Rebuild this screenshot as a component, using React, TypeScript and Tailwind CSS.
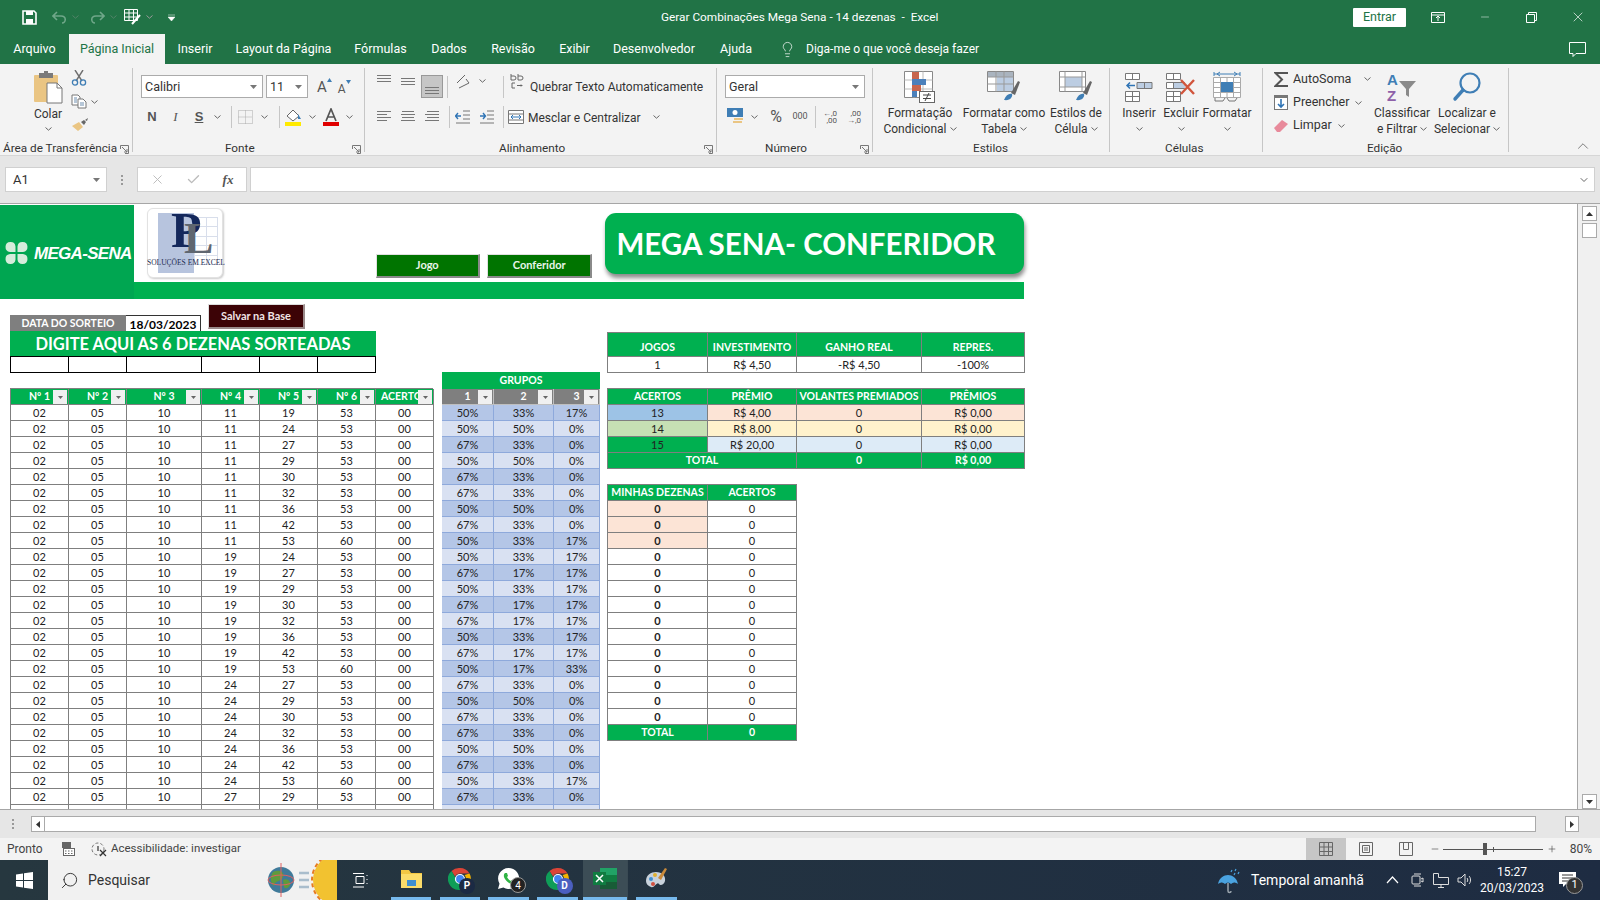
import { ReactNode } from "react";
import { ChevronDown, ChevronUp, Lightbulb, Search, Minus, X, Plus, Check } from "lucide-react";

const Chev = ({ className = "" }: { className?: string }) => (
  <svg width="7" height="4" viewBox="0 0 7 4" className={`shrink-0 ${className}`}>
    <path d="M.5.5 3.5 3.2 6.5.5" fill="none" stroke="#666" strokeWidth="1" />
  </svg>
);

const Caret = ({ className = "" }: { className?: string }) => (
  <svg width="7" height="4" viewBox="0 0 7 4" className={`shrink-0 ${className}`}>
    <path d="M0 0h7L3.5 4z" fill="#777" />
  </svg>
);

const VSep = ({ className = "" }: { className?: string }) => (
  <div className={`h-[22px] w-px shrink-0 bg-[#c6c6c6] ${className}`} />
);

const Launcher = () => (
  <svg width="9" height="9" viewBox="0 0 9 9" className="shrink-0">
    <path d="M.5 4V.5H8.500V8.500H5M2 2l5 5M7 4v3H4" fill="none" stroke="#777" strokeWidth="1" />
  </svg>
);

const Lines = ({ kind }: { kind: "l" | "c" | "r" }) => {
  const s = kind === "l" ? [1, 1, 1, 1] : kind === "c" ? [2, 1, 2, 1] : [3, 1, 3, 1];
  const w = kind === "l" ? [14, 10, 14, 10] : kind === "c" ? [12, 14, 12, 14] : [12, 14, 12, 14];
  return (
    <svg width="16" height="14" viewBox="0 0 16 14">
      {s.map((x, i) => (
        <rect key={i} x={x} y={1 + i * 3} width={w[i]} height="1" fill="#777" />
      ))}
    </svg>
  );
};

const VAlign = ({ offset }: { offset: number }) => (
  <svg width="16" height="14" viewBox="0 0 16 14">
    {[0, 3, 6].map((d) => (
      <rect key={d} x="1" y={offset + d} width="14" height="1" fill="#777" />
    ))}
  </svg>
);

const Group = ({
  w,
  label,
  labelClass = "justify-center",
  launcher,
  children,
}: {
  w: string;
  label: string;
  labelClass?: string;
  launcher?: boolean;
  children: ReactNode;
}) => (
  <div className={`flex h-full shrink-0 flex-col ${w}`}>
    <div className="h-[77px] overflow-hidden">{children}</div>
    <div className={`flex h-[14px] items-center whitespace-nowrap pt-[2px] text-[11.75px] leading-none ${labelClass}`}>
      <span>{label}</span>
      {launcher && (
        <span className="ml-auto mr-[3px]">
          <Launcher />
        </span>
      )}
    </div>
  </div>
);

const RibbonSep = () => <div className="my-[4px] h-[84px] w-px shrink-0 bg-[#c6c6c6]" />;

const BigButton = ({
  w,
  icon,
  a,
  b,
  chevInline = true,
}: {
  w: string;
  icon: ReactNode;
  a: string;
  b?: string;
  chevInline?: boolean;
}) => (
  <div className={`flex shrink-0 flex-col items-center text-[12px] leading-[16px] ${w}`}>
    <div className="mt-[6px] flex h-[34px] items-center justify-center">{icon}</div>
    <div className="mt-px whitespace-nowrap">{a}</div>
    {chevInline ? (
      <div className="flex items-center gap-[3px] whitespace-nowrap">
        {b}
        <Chev />
      </div>
    ) : (
      <div className="flex h-[16px] items-center">
        <Chev />
      </div>
    )}
  </div>
);

const Combo = ({ w, text }: { w: string; text: string }) => (
  <div className={`flex h-[23px] shrink-0 items-center justify-between border border-[#ababab] bg-white pl-[3px] pr-[5px] pt-px text-[12.5px] ${w}`}>
    <span>{text}</span>
    <Caret />
  </div>
);

const PasteIcon = () => (
  <svg width="30" height="33" viewBox="0 0 30 33">
    <rect x="1" y="4" width="24" height="27" rx="1" fill="#eac583" />
    <rect x="6" y="2" width="14" height="5" fill="#7a7a7a" />
    <rect x="11" y="0" width="4" height="3" fill="#7a7a7a" />
    <path d="M14 12h10l5 5v15H14z" fill="#fff" stroke="#777" />
    <path d="M24 12v5h5" fill="none" stroke="#777" />
  </svg>
);

const ScissorsIcon = () => (
  <svg width="16" height="16" viewBox="0 0 16 16">
    <path d="M4 0l7 11M12 0 5 11" stroke="#6f6f6f" strokeWidth="1.400" fill="none" />
    <circle cx="4" cy="12.500" r="2.600" fill="none" stroke="#3f7eb5" strokeWidth="1.300" />
    <circle cx="12" cy="12.500" r="2.600" fill="none" stroke="#3f7eb5" strokeWidth="1.300" />
  </svg>
);

const CopyIcon = () => (
  <svg width="16" height="15" viewBox="0 0 16 15">
    <path d="M1 1h6l2 2v8H1z" fill="#fff" stroke="#777" />
    <path d="M7 5h5l3 3v6H7z" fill="#fff" stroke="#777" />
    <path d="M3 4h3M3 6h3M3 8h3M9 9h4M9 11h4" stroke="#6f8fb0" />
  </svg>
);

const BrushIcon = () => (
  <svg width="18" height="15" viewBox="0 0 18 15">
    <path d="M1 9l7-4 4 5-5 4z" fill="#eac583" />
    <path d="M10 5l3-2 2 2-2 3z" fill="#666" />
    <path d="M14 3l3-2-1 3z" fill="#666" />
  </svg>
);

const CondFormatIcon = () => (
  <svg width="32" height="32" viewBox="0 0 32 32">
    <path d="M.5.5h28v26H.5z" fill="#fff" stroke="#888" />
    <path d="M10 .5v26M19 .5v26M.5 9h28M.5 18h28" stroke="#bbb" />
    <rect x="8" y="1" width="7" height="7" fill="#c8664e" />
    <rect x="8" y="8" width="14" height="6" fill="#4b80bb" />
    <rect x="8" y="14" width="9" height="6" fill="#c8664e" />
    <rect x="8" y="20" width="5" height="6" fill="#4b80bb" />
    <rect x="15.500" y="20.500" width="15" height="11" fill="#fff" stroke="#666" />
    <path d="M19 24h8M19 27.500h8M25 22l-4 8" stroke="#444" fill="none" />
  </svg>
);

const TableStyleIcon = () => (
  <svg width="34" height="32" viewBox="0 0 34 32">
    <path d="M.5.5h26v20H.5z" fill="#fff" stroke="#888" />
    <rect x="1" y="1" width="25" height="5" fill="#aab4bf" />
    <rect x="10" y="6" width="16" height="14" fill="#bccde2" />
    <path d="M9 .5v20M17 .5v20M.5 6h26M.5 13h26" stroke="#999" />
    <path d="M24 22l7-12 2 1-5 13z" fill="#666" />
    <path d="M17 29c2-5 5-7 8-6 1 3-2 7-8 6z" fill="#3f7eb5" />
  </svg>
);

const CellStyleIcon = () => (
  <svg width="34" height="32" viewBox="0 0 34 32">
    <path d="M.5.5h26v20H.5z" fill="#fff" stroke="#888" />
    <rect x="6" y="6" width="17" height="10" fill="#bccde2" />
    <path d="M6 .5v20M23 .5v20M.5 6h26M.5 16h26" stroke="#999" />
    <path d="M24 22l7-12 2 1-5 13z" fill="#666" />
    <path d="M17 29c2-5 5-7 8-6 1 3-2 7-8 6z" fill="#3f7eb5" />
  </svg>
);

const InsertIcon = () => (
  <svg width="28" height="30" viewBox="0 0 28 30">
    <path d="M.5 1.500h14v6H.5zM.5 19.500h14v10H.5zM7.500 19.500v10M.5 24.500h14M7.500 1.500v6" fill="#fff" stroke="#777" />
    <path d="M12 10.500h15v6H12zM19.500 10.500v6" fill="#bccde2" stroke="#777" />
    <path d="M10 13.500H2M5 10.500l-3 3 3 3" stroke="#2f74b5" strokeWidth="1.500" fill="none" />
  </svg>
);

const DeleteIcon = () => (
  <svg width="30" height="30" viewBox="0 0 30 30">
    <path d="M.5 1.500h14v6H.5zM.5 19.500h14v10H.5zM7.500 19.500v10M.5 24.500h14M7.500 1.500v6M.5 10.500h18v6H.5zM7.500 10.500v6" fill="#fff" stroke="#777" />
    <rect x="8" y="11" width="11" height="5" fill="#bccde2" />
    <path d="M15 8l13 14M28 8 15 22" stroke="#d1553c" strokeWidth="2.400" />
  </svg>
);

const FormatIcon = () => (
  <svg width="28" height="32" viewBox="0 0 28 32">
    <path d="M.5 6.500h27v20H.5zM7.500 6.500v20M20.500 6.500v20M14 6.500v20M.5 11.500h27M.5 16.500h27M.5 21.500h27" fill="#fff" stroke="#aaa" />
    <rect x="8" y="11" width="12" height="10" fill="#3f7eb5" />
    <path d="M1 3h26M1 1v4M27 1v4M4 3l3-2M4 3l3 2M24 3l-3-2M24 3l-3 2" stroke="#3f7eb5" fill="none" />
    <path d="M2 27v3h8l2-3M14 27l2 3h6l2-3" stroke="#777" fill="none" />
  </svg>
);

const SortIcon = () => (
  <svg width="30" height="32" viewBox="0 0 30 32">
    <text x="0" y="14" fontSize="15" fontWeight="700" fill="#3f7eb5" fontFamily="Liberation Sans, sans-serif">A</text>
    <text x="0" y="30" fontSize="15" fontWeight="700" fill="#8e60a8" fontFamily="Liberation Sans, sans-serif">Z</text>
    <path d="M12 10h17l-7 8v8l-3-2v-6z" fill="#8a8a8a" />
  </svg>
);

const FindIcon = () => (
  <svg width="30" height="32" viewBox="0 0 30 32">
    <circle cx="18" cy="12" r="9.500" fill="none" stroke="#3f7eb5" strokeWidth="2.200" />
    <path d="M11 19 3 28" stroke="#3f7eb5" strokeWidth="3.400" strokeLinecap="round" />
  </svg>
);

const SmallIcon = ({ children, w = "w-[24px]" }: { children: ReactNode; w?: string }) => (
  <div className={`flex h-full shrink-0 items-center justify-center ${w}`}>{children}</div>
);

const Ribbon = () => (
  <div className="flex h-[92px] border-b border-[#d6d6d6] bg-[#f3f3f3] text-[#333]">
    <Group w="w-[132px]" label="Área de Transferência" labelClass="pl-[3px]" launcher>
      <div className="flex">
        <div className="ml-[33px] flex w-[30px] flex-col items-center text-[12px]">
          <div className="mt-[7px]">
            <PasteIcon />
          </div>
          <div className="mt-[2px] leading-[16px]">Colar</div>
          <Chev className="mt-[5px]" />
        </div>
        <div className="ml-[8px] flex flex-col">
          <div className="mt-[6px]">
            <ScissorsIcon />
          </div>
          <div className="mt-[8px] flex items-center gap-[4px]">
            <CopyIcon />
            <Chev />
          </div>
          <div className="mt-[8px]">
            <BrushIcon />
          </div>
        </div>
      </div>
    </Group>
    <RibbonSep />
    <Group w="w-[231px]" label="Fonte" launcher labelClass="pl-[92px]">
      <div className="flex h-[34px] items-end pl-[8px]">
        <Combo w="w-[122px]" text="Calibri" />
        <Combo w="w-[42px] ml-[3px]" text="11" />
        <span className="ml-[9px] mb-[3px] text-[15px] leading-none text-[#555]">A</span>
        <svg width="5" height="4" viewBox="0 0 5 4" className="mb-[16px]"><path d="M0 4l2.500-4L5 4z" fill="#3f7eb5" /></svg>
        <span className="ml-[6px] mb-[3px] text-[12px] leading-none text-[#555]">A</span>
        <svg width="5" height="4" viewBox="0 0 5 4" className="mb-[14px]"><path d="M0 0l2.500 4L5 0z" fill="#3f7eb5" /></svg>
      </div>
      <div className="mt-[7px] flex h-[23px] items-center pl-[7px] text-[13px] text-[#555]">
        <SmallIcon><b className="font-['Liberation_Sans',sans-serif]">N</b></SmallIcon>
        <SmallIcon w="w-[23px]"><i className="font-['Liberation_Serif',serif]">I</i></SmallIcon>
        <SmallIcon><b className="underline font-['Liberation_Sans',sans-serif]">S</b></SmallIcon>
        <SmallIcon w="w-[12px]"><Chev /></SmallIcon>
        <VSep className="ml-[8px]" />
        <SmallIcon w="w-[26px]">
          <svg width="15" height="14" viewBox="0 0 15 14"><path d="M.5.5h14v13H.5zM7.500 .5v13M.5 7h14" fill="none" stroke="#aaa" strokeDasharray="1 1" /></svg>
        </SmallIcon>
        <SmallIcon w="w-[12px]"><Chev /></SmallIcon>
        <VSep className="ml-[9px]" />
        <SmallIcon w="w-[26px]">
          <svg width="17" height="18" viewBox="0 0 17 18"><path d="M2 8l6-6 6 6-6 5z" fill="#fff" stroke="#666" /><path d="M13 6l3 5h-3z" fill="#3f7eb5" /><rect x="0" y="14" width="16" height="4" fill="#ffea00" /></svg>
        </SmallIcon>
        <SmallIcon w="w-[12px]"><Chev /></SmallIcon>
        <SmallIcon w="w-[26px]">
          <svg width="16" height="18" viewBox="0 0 16 18"><path d="M3 13 8 1l5 12M5 9h6" fill="none" stroke="#555" strokeWidth="1.700" /><rect x="0" y="14" width="16" height="4" fill="#e00000" /></svg>
        </SmallIcon>
        <SmallIcon w="w-[10px]"><Chev /></SmallIcon>
      </div>
    </Group>
    <RibbonSep />
    <Group w="w-[351px]" label="Alinhamento" launcher labelClass="pl-[134px]">
      <div className="flex h-[34px] items-end pl-[7px]">
        <SmallIcon><VAlign offset={1} /></SmallIcon>
        <SmallIcon><VAlign offset={4} /></SmallIcon>
        <div className="ml-[1px] flex h-[23px] w-[22px] items-center justify-center border border-[#999] bg-[#c6c6c6]"><VAlign offset={7} /></div>
        <VSep className="ml-[4px]" />
        <SmallIcon w="w-[30px]">
          <svg width="16" height="16" viewBox="0 0 16 16"><path d="M2 10l8-8M4 15l10-5M11 6l3 4" stroke="#666" fill="none" /></svg>
        </SmallIcon>
        <SmallIcon w="w-[8px]"><Chev /></SmallIcon>
        <VSep className="ml-[17px]" />
        <SmallIcon w="w-[26px]">
          <svg width="14" height="16" viewBox="0 0 14 16"><path d="M1 1v6h3a2 2 0 0 0 0-4H1M8 1v6h3a2 2 0 0 0 0-4H8M5 10H2v5h3M7 12.500h5l-1-1M12 12.500l-1 1" fill="none" stroke="#666" /></svg>
        </SmallIcon>
        <span className="h-[23px] whitespace-nowrap pt-px text-[12px] leading-[23px]">Quebrar Texto Automaticamente</span>
      </div>
      <div className="mt-[7px] flex h-[23px] items-center pl-[7px]">
        <SmallIcon><Lines kind="l" /></SmallIcon>
        <SmallIcon><Lines kind="c" /></SmallIcon>
        <SmallIcon w="w-[23px]"><Lines kind="r" /></SmallIcon>
        <VSep className="ml-[6px]" />
        <SmallIcon w="w-[26px]">
          <svg width="16" height="14" viewBox="0 0 16 14"><path d="M8 1h7M8 5h7M8 9h7M1 13h14" stroke="#777" /><path d="M6 6H1M3 3 .5 6 3 9" stroke="#2f74b5" strokeWidth="1.400" fill="none" /></svg>
        </SmallIcon>
        <SmallIcon w="w-[22px]">
          <svg width="16" height="14" viewBox="0 0 16 14"><path d="M8 1h7M8 5h7M8 9h7M1 13h14" stroke="#777" /><path d="M1 6h5M4 3l2.500 3L4 9" stroke="#2f74b5" strokeWidth="1.400" fill="none" /></svg>
        </SmallIcon>
        <VSep className="ml-[5px]" />
        <SmallIcon w="w-[24px]">
          <svg width="16" height="16" viewBox="0 0 16 16"><path d="M.5 1.500h15v13H.5zM.5 5h15M.5 11h15" fill="#fff" stroke="#777" /><path d="M3 8h10M5 6 3 8l2 2M11 6l2 2-2 2" stroke="#2f74b5" fill="none" /></svg>
        </SmallIcon>
        <span className="whitespace-nowrap pt-[2px] text-[12px]">Mesclar e Centralizar</span>
        <Chev className="ml-[12px]" />
      </div>
    </Group>
    <RibbonSep />
    <Group w="w-[155px]" label="Número" launcher labelClass="pl-[48px]">
      <div className="flex h-[34px] items-end pl-[8px]">
        <Combo w="w-[140px]" text="Geral" />
      </div>
      <div className="mt-[7px] flex h-[23px] items-center pl-[9px] text-[#555]">
        <SmallIcon w="w-[20px]">
          <svg width="18" height="17" viewBox="0 0 18 17"><rect x="0" y="0" width="16" height="9" fill="#3f7eb5" /><circle cx="8" cy="4.500" r="2.500" fill="#fff" /><rect x="7" y="10" width="9" height="2" fill="#eac583" /><rect x="6" y="13" width="9" height="2" fill="#eac583" /></svg>
        </SmallIcon>
        <SmallIcon w="w-[16px]"><Chev /></SmallIcon>
        <SmallIcon w="w-[28px]"><span className="text-[16px]">%</span></SmallIcon>
        <SmallIcon w="w-[20px]"><span className="text-[9px]">000</span></SmallIcon>
        <VSep className="ml-[5px]" />
        <SmallIcon w="w-[28px]">
          <span className="text-right text-[8px] leading-[7px]">←,0<br />,00</span>
        </SmallIcon>
        <SmallIcon w="w-[20px]">
          <span className="text-right text-[8px] leading-[7px]">,00<br />→,0</span>
        </SmallIcon>
      </div>
    </Group>
    <RibbonSep />
    <Group w="w-[236px]" label="Estilos" labelClass="pl-[100px]">
      <div className="flex">
        <BigButton w="w-[94px]" icon={<CondFormatIcon />} a="Formatação" b="Condicional" />
        <BigButton w="w-[74px]" icon={<TableStyleIcon />} a="Formatar como" b="Tabela" />
        <BigButton w="w-[66px] ml-[2px]" icon={<CellStyleIcon />} a="Estilos de" b="Célula" />
      </div>
    </Group>
    <RibbonSep />
    <Group w="w-[152px]" label="Células" labelClass="pl-[55px]">
      <div className="flex pl-[7px]">
        <BigButton w="w-[44px]" icon={<InsertIcon />} a="Inserir" chevInline={false} />
        <BigButton w="w-[40px]" icon={<DeleteIcon />} a="Excluir" chevInline={false} />
        <BigButton w="w-[52px]" icon={<FormatIcon />} a="Formatar" chevInline={false} />
      </div>
    </Group>
    <RibbonSep />
    <Group w="w-[245px]" label="Edição" labelClass="pl-[104px]">
      <div className="flex">
        <div className="ml-[11px] mt-[3px] flex w-[100px] flex-col text-[12.5px]">
          <div className="flex h-[24px] items-center">
            <svg width="15" height="15" viewBox="0 0 15 15" className="mr-[4px]"><path d="M14 1H1.500L8 7.500 1.500 14H14" fill="none" stroke="#555" strokeWidth="2" /></svg>
            <span>AutoSoma</span>
            <Chev className="ml-[13px]" />
          </div>
          <div className="flex h-[23px] items-center">
            <svg width="14" height="15" viewBox="0 0 14 15" className="mr-[5px]"><rect x=".5" y=".5" width="13" height="14" fill="#fff" stroke="#777" /><rect x="0" y="0" width="14" height="3" fill="#777" /><path d="M7 4v8M4 9l3 3 3-3" stroke="#2f74b5" strokeWidth="1.600" fill="none" /></svg>
            <span>Preencher</span>
            <Chev className="ml-[6px]" />
          </div>
          <div className="flex h-[23px] items-center">
            <svg width="14" height="12" viewBox="0 0 14 12" className="mr-[5px]"><path d="M0 8l8-8 6 4-8 8H3z" fill="#e88a9b" /></svg>
            <span>Limpar</span>
            <Chev className="ml-[6px]" />
          </div>
        </div>
        <BigButton w="w-[66px] ml-[-5px]" icon={<SortIcon />} a="Classificar" b="e Filtrar" />
        <BigButton w="w-[64px]" icon={<FindIcon />} a="Localizar e" b="Selecionar" />
      </div>
    </Group>
    <RibbonSep />
    <div className="flex flex-1 items-end justify-end pr-[8px]">
      <ChevronUp size={18} strokeWidth={1} className="text-[#555]" />
    </div>
  </div>
);

const tabs = [
  { label: "Arquivo", w: "w-[69px]" },
  { label: "Página Inicial", w: "w-[96px]", active: true },
  { label: "Inserir", w: "w-[60px]" },
  { label: "Layout da Página", w: "w-[117px]" },
  { label: "Fórmulas", w: "w-[77px]" },
  { label: "Dados", w: "w-[60px]" },
  { label: "Revisão", w: "w-[68px]" },
  { label: "Exibir", w: "w-[55px]" },
  { label: "Desenvolvedor", w: "w-[104px]" },
  { label: "Ajuda", w: "w-[60px]" },
];

const TitleBar = () => (
  <div className="flex h-[34px] items-center bg-[#217346] text-white">
    <div className="flex w-[600px] items-center pl-[22px]">
      <svg width="15" height="15" viewBox="0 0 15 15"><path d="M1 1h11l2 2v11H1z" fill="none" stroke="#fff" strokeWidth="1.600" /><rect x="4" y="1" width="7" height="4" fill="#fff" /><rect x="4" y="9" width="7" height="5" fill="#fff" /></svg>
      <svg width="15" height="13" viewBox="0 0 15 13" className="ml-[15px]"><path d="M5 1 1 5l4 4M1 5h8c6 0 5 7 1 7" fill="none" stroke="#6fa789" strokeWidth="1.600" /></svg>
      <Chev className="ml-[5px] opacity-40 invert" />
      <svg width="15" height="13" viewBox="0 0 15 13" className="ml-[11px]"><path d="M10 1l4 4-4 4M14 5H6C0 5 1 12 5 12" fill="none" stroke="#6fa789" strokeWidth="1.600" /></svg>
      <Chev className="ml-[5px] opacity-40 invert" />
      <svg width="17" height="16" viewBox="0 0 17 16" className="ml-[7px]"><path d="M.5.5h13v11H.5zM5 .5v11M9.500 .5v11M.5 4h13M.5 8h13" fill="none" stroke="#fff" /><path d="M8 15l8-9" stroke="#fff" strokeWidth="2" /></svg>
      <Chev className="ml-[5px] invert" />
      <svg width="7" height="7" viewBox="0 0 7 7" className="ml-[15px]"><path d="M0 1h7M0 3h7L3.500 7z" fill="#fff" stroke="#fff" strokeWidth=".5" /></svg>
    </div>
    <div className="ml-[61px] mt-[2px] whitespace-pre text-[11.8px]">Gerar Combinações Mega Sena - 14 dezenas  -  Excel</div>
    <div className="ml-auto flex items-center">
      <div className="flex h-[19px] w-[53px] items-center justify-center rounded-[1px] bg-white text-[12.5px] text-[#217346]">Entrar</div>
      <svg width="14" height="11" viewBox="0 0 14 11" className="ml-[25px]"><path d="M.5.5h13v10H.5zM.5 3h13M7 9V4M5 6l2-2 2 2" fill="none" stroke="#fff" /></svg>
      <Minus size={12} strokeWidth={1} className="ml-[34px]" />
      <svg width="11" height="11" viewBox="0 0 11 11" className="ml-[35px]"><path d="M.5 2.500h8v8h-8zM2.500 2.500v-2h8v8h-2" fill="none" stroke="#fff" /></svg>
      <X size={16} strokeWidth={1} className="ml-[33px] mr-[14px]" />
    </div>
  </div>
);

const TabBar = () => (
  <div className="flex h-[30px] bg-[#217346] text-[12.5px] text-white">
    {tabs.map((t) => (
      <div
        key={t.label}
        className={`flex shrink-0 items-center justify-center whitespace-nowrap ${t.w} ${t.active ? "bg-[#f3f3f3] text-[#217346]" : ""}`}
      >
        {t.label}
      </div>
    ))}
    <div className="ml-[13px] flex items-center">
      <Lightbulb size={17} strokeWidth={1} />
      <span className="ml-[10px] text-[12px]">Diga-me o que você deseja fazer</span>
    </div>
    <div className="ml-auto flex items-center pr-[14px]">
      <svg width="17" height="15" viewBox="0 0 17 15"><path d="M.5.5h16v11H7l-3 3v-3H.5z" fill="none" stroke="#fff" /></svg>
    </div>
  </div>
);

const FormulaBar = () => (
  <div className="flex h-[47px] items-center bg-[#e6e6e6] py-[8px] pl-[5px] pr-[5px] text-[#333]">
    <div className="flex h-[25px] w-[102px] items-center justify-between border border-[#d0d0d0] bg-white pl-[7px] pr-[6px] text-[13px]">
      A1
      <Caret />
    </div>
    <div className="flex w-[30px] flex-col items-center gap-[2px]">
      <i className="h-[2px] w-[2px] bg-[#999]" />
      <i className="h-[2px] w-[2px] bg-[#999]" />
      <i className="h-[2px] w-[2px] bg-[#999]" />
    </div>
    <div className="flex h-[25px] w-[110px] items-center border border-[#d0d0d0] bg-white text-[#bbb]">
      <SmallIcon w="w-[38px]"><X size={15} strokeWidth={1.5} /></SmallIcon>
      <SmallIcon w="w-[34px]"><Check size={15} strokeWidth={2.2} /></SmallIcon>
      <SmallIcon w="w-[36px]">
        <i className="font-['Liberation_Serif',serif] text-[13px] font-bold text-[#555]">fx</i>
      </SmallIcon>
    </div>
    <div className="ml-[3px] flex h-[25px] flex-1 items-center justify-end border border-[#d0d0d0] bg-white pr-[4px]">
      <ChevronDown size={12} strokeWidth={2} className="text-[#666]" />
    </div>
  </div>
);

const FilterBtn = () => (
  <span className="absolute right-px top-px flex h-[14px] w-[14px] items-center justify-center bg-[#f0f0f0]">
    <svg width="5" height="3" viewBox="0 0 5 3"><path d="M0 0h5L2.500 3z" fill="#666" /></svg>
  </span>
);

const nums: [string, string, string, number, number, number][] = [
  ["11", "19", "53", 50, 33, 17],
  ["11", "24", "53", 50, 50, 0],
  ["11", "27", "53", 67, 33, 0],
  ["11", "29", "53", 50, 50, 0],
  ["11", "30", "53", 67, 33, 0],
  ["11", "32", "53", 67, 33, 0],
  ["11", "36", "53", 50, 50, 0],
  ["11", "42", "53", 67, 33, 0],
  ["11", "53", "60", 50, 33, 17],
  ["19", "24", "53", 50, 33, 17],
  ["19", "27", "53", 67, 17, 17],
  ["19", "29", "53", 50, 33, 17],
  ["19", "30", "53", 67, 17, 17],
  ["19", "32", "53", 67, 17, 17],
  ["19", "36", "53", 50, 33, 17],
  ["19", "42", "53", 67, 17, 17],
  ["19", "53", "60", 50, 17, 33],
  ["24", "27", "53", 67, 33, 0],
  ["24", "29", "53", 50, 50, 0],
  ["24", "30", "53", 67, 33, 0],
  ["24", "32", "53", 67, 33, 0],
  ["24", "36", "53", 50, 50, 0],
  ["24", "42", "53", 67, 33, 0],
  ["24", "53", "60", 50, 33, 17],
  ["27", "29", "53", 67, 33, 0],
  ["27", "30", "53", 67, 17, 0],
];

const leftCols = ["w-[58px]", "w-[58px]", "w-[75px]", "w-[58px]", "w-[58px]", "w-[58px]", "w-[58px]"];
const groupCols = ["w-[52px]", "w-[60px]", "w-[46px]"];
const col1 = "w-[100px]";
const col2 = "w-[89px]";
const col3 = "w-[125px]";
const col4 = "w-[103px]";

const Cell = ({ w, bg = "", border = "border-[#7f7f7f]", className = "", children }: { w: string; bg?: string; border?: string; className?: string; children?: ReactNode }) => (
  <div className={`flex h-[16px] shrink-0 items-center justify-center overflow-hidden whitespace-nowrap border-b border-r pt-px ${w} ${bg} ${border} ${className}`}>
    {children}
  </div>
);

const HeadCell = ({ w, label, bg = "bg-[#00b050]", border = "border-[#7f7f7f]" }: { w: string; label: string; bg?: string; border?: string }) => (
  <div className={`relative flex h-[16px] shrink-0 items-center justify-center overflow-hidden whitespace-nowrap border-b border-r pt-px text-[10.5px] font-bold text-white ${w} ${bg} ${border}`}>
    {label}
    <FilterBtn />
  </div>
);

const Row = ({ children, className = "" }: { children: ReactNode; className?: string }) => (
  <div className={`flex ${className}`}>{children}</div>
);

const GreenCell = ({ w, className = "", children }: { w: string; className?: string; children?: ReactNode }) => (
  <Cell w={w} bg="bg-[#00b050]" className={`text-[10.5px] font-bold text-white ${className}`}>
    {children}
  </Cell>
);

const Clover = () => (
  <svg width="25" height="24" viewBox="0 0 25 24" className="shrink-0">
    <g fill="#d6ecdb">
      <path d="M11.500 11H6a5 5 0 1 1 5.500-5.500z" />
      <path d="M13.500 11H19a5 5 0 1 0-5.500-5.500z" />
      <path d="M11.500 13H6a5 5 0 1 0 5.500 5.500z" />
      <path d="M13.500 13H19a5 5 0 1 1-5.500 5.500z" />
    </g>
  </svg>
);

const PlLogo = () => (
  <div className="relative ml-[13px] mt-[3px] h-[70px] w-[76px] rounded-[6px] border border-[#e2e2e2] bg-white shadow-[1px_1px_2px_#ccc]">
    <div className="absolute left-[10px] top-[4px] h-[60px] w-[36px] bg-[#b7c4de]" />
    <div className="absolute left-[46px] top-[8px] grid h-[48px] w-[24px] grid-cols-2 grid-rows-5 gap-px bg-[#d8deeb] p-px">
      {Array.from({ length: 10 }).map((_, i) => (
        <i key={i} className="bg-white" />
      ))}
    </div>
    <span className="absolute left-[23px] top-[-4px] font-['Liberation_Serif',serif] text-[50px] font-bold leading-none text-[#14285c]">P</span>
    <span className="absolute left-[36px] top-[8px] font-['Liberation_Serif',serif] text-[44px] font-bold leading-none text-[#5f6670]">L</span>
    <span className="absolute left-[-6px] top-[50px] w-[88px] whitespace-nowrap text-center font-['Liberation_Serif',serif] text-[7.5px] leading-none text-[#1c2a50]">SOLUÇÕES EM EXCEL</span>
  </div>
);

const SheetHeader = () => (
  <div className="flex h-[95px] pt-px">
    <div className="flex h-[94px] w-[134px] shrink-0 items-center overflow-hidden whitespace-nowrap bg-[#00a651] pl-[4px] pt-[2px]">
      <Clover />
      <span className="ml-[5px] font-['Liberation_Sans',sans-serif] text-[17px] font-bold italic leading-none tracking-[-0.7px] text-white">MEGA-SENA</span>
    </div>
    <div className="flex w-[890px] flex-col">
      <div className="flex h-[77px]">
        <PlLogo />
        <div className="ml-[153px] mt-[49px] flex h-[24px] w-[105px] items-center justify-center border-b-2 border-l border-r-2 border-t border-b-[#8a8a8a] border-l-[#e0e0e0] border-r-[#8a8a8a] border-t-[#e0e0e0] bg-[#007400] text-[11px] font-bold text-[#e8f4e8]">
          Jogo
        </div>
        <div className="ml-[7px] mt-[49px] flex h-[24px] w-[106px] items-center justify-center border-b-2 border-l border-r-2 border-t border-b-[#8a8a8a] border-l-[#e0e0e0] border-r-[#8a8a8a] border-t-[#e0e0e0] bg-[#007400] text-[11px] font-bold text-[#e8f4e8]">
          Conferidor
        </div>
        <div className="ml-[13px] mt-[8px] flex h-[61px] w-[421px] items-center whitespace-nowrap rounded-[11px] bg-[#00b050] pl-[11px] text-[29.5px] font-bold leading-none text-white shadow-[1px_4px_4px_rgba(0,0,0,0.45)]">
          MEGA SENA- CONFERIDOR
        </div>
      </div>
      <div className="h-[17px] bg-[#00b050]" />
    </div>
  </div>
);

const LeftColumn = () => (
  <div className="ml-[10px] w-[423px] shrink-0">
    <div className="flex h-[32px] items-end">
      <div className="flex h-[16px] w-[116px] items-center justify-center bg-[#7f7f7f] pt-[2px] text-[10.5px] font-bold text-white">DATA DO SORTEIO</div>
      <div className="flex h-[16px] w-[75px] items-center justify-center border-r border-t border-[#333] bg-white pt-[2px] text-[12px] font-bold text-black">18/03/2023</div>
      <div className="mb-[2px] ml-[7px] flex h-[25px] w-[97px] items-center justify-center border-b-2 border-l border-r-2 border-t border-b-[#9a8a8a] border-l-[#ddd] border-r-[#9a8a8a] border-t-[#ddd] bg-[#3c0306] font-bold text-[#f1e4e4]">
        Salvar na Base
      </div>
    </div>
    <div className="flex h-[25px] w-[366px] items-center justify-center whitespace-nowrap bg-[#00b050] pt-[2px] text-[16.5px] font-bold text-white">
      DIGITE AQUI AS 6 DEZENAS SORTEADAS
    </div>
    <Row className="w-[366px] border-l border-t border-black">
      {leftCols.slice(0, 6).map((c, i) => (
        <Cell key={i} w={c} border="border-black" />
      ))}
    </Row>
    <div className="h-[15px]" />
    <div className="border-l border-t border-[#7f7f7f]">
      <Row>
        {["Nº 1", "Nº 2", "Nº 3", "Nº 4", "Nº 5", "Nº 6", "ACERTOS"].map((l, i) => (
          <HeadCell key={l} w={leftCols[i]} label={l} />
        ))}
      </Row>
      {nums.map((r, i) => (
        <Row key={i}>
          {["02", "05", "10", r[0], r[1], r[2], "00"].map((v, j) => (
            <Cell key={j} w={leftCols[j]}>
              {v}
            </Cell>
          ))}
        </Row>
      ))}
    </div>
  </div>
);

const MiddleColumn = () => (
  <div className="ml-[9px] w-[158px] shrink-0 pt-[73px]">
    <div className="flex h-[17px] items-center justify-center bg-[#00b050] pt-px text-[10.5px] font-bold text-white">GRUPOS</div>
    <Row>
      {["1", "2", "3"].map((l, i) => (
        <HeadCell key={l} w={groupCols[i]} label={l} bg="bg-[#7f7f7f]" border="border-[#bfbfbf]" />
      ))}
    </Row>
    {nums.map((r, i) => (
      <Row key={i}>
        {[r[3], r[4], r[5]].map((v, j) => (
          <Cell key={j} w={groupCols[j]} bg={i % 2 === 0 ? "bg-[#b4c6e7]" : "bg-[#d9e1f2]"} border="border-[#8ea9db]">
            {v}%
          </Cell>
        ))}
      </Row>
    ))}
  </div>
);

const RightColumn = () => (
  <div className="ml-[7px] w-[418px] shrink-0 pt-[33px]">
    <div className="w-[418px] border-l border-t border-[#7f7f7f]">
      <Row>
        {[
          ["JOGOS", col1],
          ["INVESTIMENTO", col2],
          ["GANHO REAL", col3],
          ["REPRES.", col4],
        ].map(([l, w]) => (
          <GreenCell key={l} w={`${w} !h-[24px] !pt-[6px]`}>
            {l}
          </GreenCell>
        ))}
      </Row>
      <Row>
        <Cell w={col1}>1</Cell>
        <Cell w={col2}>R$ 4,50</Cell>
        <Cell w={col3}>-R$ 4,50</Cell>
        <Cell w={col4}>-100%</Cell>
      </Row>
    </div>
    <div className="mt-[15px] w-[418px] border-l border-t border-[#7f7f7f]">
      <Row>
        <GreenCell w={col1}>ACERTOS</GreenCell>
        <GreenCell w={col2}>PRÊMIO</GreenCell>
        <GreenCell w={col3}>VOLANTES PREMIADOS</GreenCell>
        <GreenCell w={col4}>PRÊMIOS</GreenCell>
      </Row>
      <Row>
        <Cell w={col1} bg="bg-[#9dc3e6]">13</Cell>
        <Cell w={col2} bg="bg-[#fce4d6]">R$ 4,00</Cell>
        <Cell w={col3} bg="bg-[#fce4d6]">0</Cell>
        <Cell w={col4} bg="bg-[#fce4d6]">R$ 0,00</Cell>
      </Row>
      <Row>
        <Cell w={col1} bg="bg-[#c6e0b4]">14</Cell>
        <Cell w={col2} bg="bg-[#fff2cc]">R$ 8,00</Cell>
        <Cell w={col3} bg="bg-[#fff2cc]">0</Cell>
        <Cell w={col4} bg="bg-[#fff2cc]">R$ 0,00</Cell>
      </Row>
      <Row>
        <Cell w={col1} bg="bg-[#00b050]">15</Cell>
        <Cell w={col2} bg="bg-[#ddebf7]">R$ 20,00</Cell>
        <Cell w={col3} bg="bg-[#ddebf7]">0</Cell>
        <Cell w={col4} bg="bg-[#ddebf7]">R$ 0,00</Cell>
      </Row>
      <Row>
        <GreenCell w="w-[189px]">TOTAL</GreenCell>
        <GreenCell w={col3}>0</GreenCell>
        <GreenCell w={col4}>R$ 0,00</GreenCell>
      </Row>
    </div>
    <div className="mt-[15px] w-[190px] border-l border-t border-[#7f7f7f]">
      <Row>
        <GreenCell w={col1}>MINHAS DEZENAS</GreenCell>
        <GreenCell w={col2}>ACERTOS</GreenCell>
      </Row>
      {Array.from({ length: 14 }).map((_, i) => (
        <Row key={i}>
          <Cell w={col1} bg={i < 3 ? "bg-[#fce4d6]" : ""} className="font-bold">0</Cell>
          <Cell w={col2}>0</Cell>
        </Row>
      ))}
      <Row>
        <GreenCell w={col1}>TOTAL</GreenCell>
        <GreenCell w={col2}>0</GreenCell>
      </Row>
    </div>
  </div>
);

const VScroll = () => (
  <div className="flex w-[22px] shrink-0 flex-col items-center bg-[#f0f0f0] px-[3px] pt-[2px]">
    <div className="flex h-[15px] w-[15px] items-center justify-center border border-[#aaa] bg-white">
      <svg width="7" height="4" viewBox="0 0 7 4"><path d="M0 4h7L3.500 0z" fill="#333" /></svg>
    </div>
    <div className="mt-[2px] h-[15px] w-[15px] border border-[#aaa] bg-white" />
    <div className="mt-auto flex h-[15px] w-[15px] items-center justify-center border border-[#aaa] bg-white">
      <svg width="7" height="4" viewBox="0 0 7 4"><path d="M0 0h7L3.500 4z" fill="#333" /></svg>
    </div>
  </div>
);

const Sheet = () => (
  <div className="flex h-[607px] border-b border-t border-[#a6a6a6] bg-white">
    <div className="h-full w-[1578px] shrink-0 overflow-hidden border-r border-[#a6a6a6] font-['Lato',sans-serif] text-[11px] text-[#222]">
      <SheetHeader />
      <div className="flex">
        <LeftColumn />
        <MiddleColumn />
        <RightColumn />
      </div>
    </div>
    <VScroll />
  </div>
);

const HScroll = () => (
  <div className="flex h-[28px] items-center bg-[#e6e6e6] pl-[11px]">
    <div className="flex w-[20px] flex-col gap-[2px] pl-[1px]">
      <i className="h-[2px] w-[2px] bg-[#999]" />
      <i className="h-[2px] w-[2px] bg-[#999]" />
      <i className="h-[2px] w-[2px] bg-[#999]" />
    </div>
    <div className="flex h-[16px] w-[14px] items-center justify-center border border-[#aaa] bg-white">
      <svg width="4" height="7" viewBox="0 0 4 7"><path d="M4 0v7L0 3.500z" fill="#333" /></svg>
    </div>
    <div className="h-[16px] w-[1491px] border-b border-r border-t border-[#aaa] bg-white" />
    <div className="flex h-[16px] w-[43px] items-center justify-end">
      <div className="flex h-[16px] w-[14px] items-center justify-center border border-[#aaa] bg-white">
        <svg width="4" height="7" viewBox="0 0 4 7"><path d="M0 0v7l4-3.500z" fill="#333" /></svg>
      </div>
    </div>
  </div>
);

const StatusBar = () => (
  <div className="flex h-[22px] items-center bg-[#f3f3f3] text-[12px] text-[#444]">
    <span className="ml-[7px] w-[54px]">Pronto</span>
    <svg width="14" height="14" viewBox="0 0 14 14" className="ml-px"><rect x="0" y="0" width="9" height="6" fill="#666" /><rect x="1.500" y="6.500" width="11" height="7" fill="#fff" stroke="#666" /><path d="M3 9h1.500M6 9h1.500M9 9h1.500M3 11.500h1.500M6 11.500h1.500M9 11.500h1.500" stroke="#666" /></svg>
    <svg width="16" height="15" viewBox="0 0 16 15" className="ml-[15px]"><circle cx="7" cy="7" r="6" fill="none" stroke="#777" strokeDasharray="3 2" /><path d="M7 4v5M9 8l6 6M15 8l-6 6" stroke="#333" strokeWidth="1.200" /></svg>
    <span className="ml-[4px] text-[11.5px]">Acessibilidade: investigar</span>
    <div className="ml-auto flex h-full items-center">
      <div className="flex h-full w-[40px] items-center justify-center bg-[#c6c6c6]">
        <svg width="14" height="14" viewBox="0 0 14 14"><path d="M.5.5h13v13H.5zM5 .5v13M9.500 .5v13M.5 5h13M.5 9.500h13" fill="none" stroke="#666" /></svg>
      </div>
      <div className="flex h-full w-[40px] items-center justify-center">
        <svg width="14" height="14" viewBox="0 0 14 14"><path d="M.5.5h13v13H.5zM3.500 3.500h7v7h-7zM5 6h4M5 8h4" fill="none" stroke="#666" /></svg>
      </div>
      <div className="flex h-full w-[40px] items-center justify-center">
        <svg width="14" height="14" viewBox="0 0 14 14"><path d="M.5.5h13v13H.5zM4.500 .5v7h5v-7" fill="none" stroke="#666" /></svg>
      </div>
      <Minus size={10} strokeWidth={1.5} className="ml-[4px]" />
      <div className="relative ml-[3px] flex h-[12px] w-[100px] items-center">
        <div className="h-px w-full bg-[#555]" />
        <i className="absolute left-[40px] top-0 h-[12px] w-[4px] bg-[#555]" />
        <i className="absolute left-[50px] top-[4px] h-[5px] w-px bg-[#555]" />
      </div>
      <Plus size={10} strokeWidth={1.5} className="ml-[4px]" />
      <span className="ml-[13px] mr-[8px]">80%</span>
    </div>
  </div>
);

const TaskIcon = ({ w, children }: { w: string; children: ReactNode }) => (
  <div className={`relative flex h-full shrink-0 items-center justify-center border-b-[3px] border-[#76b9ed] ${w}`}>
    {children}
  </div>
);

const ChromeIcon = ({ letter, badge }: { letter: string; badge: string }) => (
  <div className="relative h-[24px] w-[24px]">
    <svg width="24" height="24" viewBox="0 0 24 24">
      <path d="M12 1a11 11 0 0 1 9.500 5.500H12a5.500 5.500 0 0 0-5 3L3.500 4A11 11 0 0 1 12 1z" fill="#db4437" />
      <path d="M21.500 6.500A11 11 0 0 1 12 23l4.800-8.200A5.500 5.500 0 0 0 16.500 8z" fill="#f4b400" />
      <path d="M12 23A11 11 0 0 1 3.500 4L8 11.500a5.500 5.500 0 0 0 7 4.500z" fill="#0f9d58" />
      <circle cx="12" cy="12" r="4.500" fill="#4285f4" stroke="#fff" strokeWidth="1.200" />
    </svg>
    <span className="absolute left-[11px] top-[11px] flex h-[16px] w-[16px] items-center justify-center rounded-full text-[10px] font-bold" style={{ backgroundColor: badge }}>
      {letter}
    </span>
  </div>
);

const Taskbar = () => (
  <div className="flex h-[40px] items-center bg-gradient-to-r from-[#26373f] to-[#1e2c42] text-white">
    <div className="flex w-[48px] justify-center">
      <svg width="17" height="17" viewBox="0 0 17 17"><path d="M0 2.500 7 1.500v6.500H0zM8 1.300l9-1.300v8H8zM0 9h7v6.500l-7-1zM8 9h9v8l-9-1.300z" fill="#fff" /></svg>
    </div>
    <div className="flex h-full w-[289px] items-center overflow-hidden bg-[#f1f1f1] pl-[12px] text-[#333]">
      <Search size={19} strokeWidth={1.2} className="-scale-x-100" />
      <span className="ml-[9px] text-[14px]">Pesquisar</span>
      <div className="ml-auto flex h-full items-center">
        <svg width="78" height="40" viewBox="0 0 78 40">
          <circle cx="22" cy="20" r="13" fill="#3f7a9a" />
          <path d="M14 12c6-3 12 0 10 5s-8 3-9 9c-4-3-4-10-1-14zM24 20c4-2 8 1 7 5-2 4-5 4-6 2z" fill="#5f9a3c" />
          <ellipse cx="22" cy="20" rx="13" ry="5" fill="none" stroke="#e06060" />
          <path d="M22 3v34" stroke="#e06060" />
          <path d="M40 13h10M40 20h10M40 27h10" stroke="#a9bdcc" strokeWidth="2.500" />
          <circle cx="80" cy="20" r="26" fill="#f2c230" />
          <circle cx="80" cy="20" r="27" fill="none" stroke="#e77c20" strokeWidth="2" strokeDasharray="4 3" />
        </svg>
      </div>
    </div>
    <div className="ml-[15px] flex w-[16px] justify-center">
      <svg width="15" height="15" viewBox="0 0 15 15"><path d="M0 .5h11M3 3.500h8v7H3zM0 14h11M14 2v1M14 6v1M14 10v1" fill="none" stroke="#fff" /></svg>
    </div>
    <div className="ml-[23px] flex h-full items-center">
      <TaskIcon w="w-[40px]">
        <svg width="23" height="21" viewBox="0 0 23 21"><path d="M1 2h8l2 3h11v15H1z" fill="#f3c744" /><rect x="1" y="6" width="21" height="14" fill="#fbdc6a" /><rect x="7" y="12" width="9" height="6" fill="#3f8fd0" /></svg>
      </TaskIcon>
      <TaskIcon w="w-[40px] ml-[9px]">
        <ChromeIcon letter="P" badge="#1b2a44" />
      </TaskIcon>
      <TaskIcon w="w-[41px] ml-[8px]">
        <div className="relative">
          <svg width="23" height="23" viewBox="0 0 23 23"><path d="M11.500 1a10.500 10.500 0 0 0-9 15.800L1 22l5.400-1.400A10.500 10.500 0 1 0 11.500 1z" fill="#fff" /><path d="M8 6c-1 1-2 3 0 6s5 5 7 5 3-2 3-3l-3-1-1 1c-2-1-3-2-4-4l1-1-1-3z" fill="#2fb344" /></svg>
          <span className="absolute left-[13px] top-[10px] flex h-[16px] w-[16px] items-center justify-center rounded-full border border-[#999] bg-[#222] text-[10px]">4</span>
        </div>
      </TaskIcon>
      <TaskIcon w="w-[41px] ml-[8px]">
        <ChromeIcon letter="D" badge="#4b5fc0" />
      </TaskIcon>
      <TaskIcon w="w-[44px] ml-[5px] bg-[#3c4d56]">
        <svg width="25" height="23" viewBox="0 0 25 23"><rect x="7" y="1" width="17" height="7" fill="#21a366" /><rect x="7" y="8" width="17" height="7" fill="#107c41" /><rect x="7" y="15" width="17" height="7" fill="#185c37" /><rect x="0" y="5" width="13" height="13" fill="#107c41" /><path d="M3 8l7 7M10 8l-7 7" stroke="#fff" strokeWidth="1.500" /></svg>
      </TaskIcon>
      <div className="h-[40px] w-px bg-[#3a4a54]" />
      <TaskIcon w="w-[41px] ml-[8px]">
        <svg width="25" height="24" viewBox="0 0 25 24"><path d="M2 14c0-6 5-9 10-9 6 0 10 4 9 9-1 4-5 5-6 3-2-3-5 5-8 3-3-1-5-3-5-6z" fill="#c8d2dc" /><circle cx="7" cy="12" r="2" fill="#3f8fd0" /><circle cx="11" cy="8" r="2" fill="#e0b030" /><circle cx="9" cy="17" r="2" fill="#d05040" /><path d="M14 11 21 1l2 1-6 11z" fill="#c98a3a" /></svg>
      </TaskIcon>
    </div>
    <div className="ml-auto flex h-full items-center">
      <svg width="24" height="27" viewBox="0 0 24 27" className="shrink-0">
        <path d="M1 17c1-6 6-9 10-9s9 3 10 9c-3-2-5-2-7 0-2-2-4-2-6 0-2-2-4-2-7 0z" fill="#4aa3e0" />
        <path d="M11 16v8c0 2 3 2 3 0" fill="none" stroke="#9aa5ad" strokeWidth="1.500" />
        <path d="M15 3l-1 2M19 2l-1 2M22 5l-1 2M18 6l-1 2" stroke="#4aa3e0" strokeWidth="1.200" />
      </svg>
      <span className="ml-[10px] w-[110px] whitespace-nowrap text-[14px]">Temporal amanhã</span>
      <SmallIcon w="w-[24px] ml-[19px]">
        <svg width="13" height="8" viewBox="0 0 13 8"><path d="M1 7l5.500-6L12 7" fill="none" stroke="#fff" strokeWidth="1.200" /></svg>
      </SmallIcon>
      <SmallIcon w="w-[24px] ml-px">
        <svg width="13" height="18" viewBox="0 0 13 18"><path d="M3 3h7M3 15h7" stroke="#ddd" /><rect x="1" y="5" width="8" height="8" rx="1" fill="none" stroke="#ddd" /><path d="M10 8l2-1v4l-2-1" fill="none" stroke="#ddd" /></svg>
      </SmallIcon>
      <SmallIcon>
        <svg width="16" height="15" viewBox="0 0 16 15"><path d="M.500 .500h5v4h10v7H.500zM8 11.500v3M5 14.500h6" fill="none" stroke="#ddd" /></svg>
      </SmallIcon>
      <SmallIcon>
        <svg width="16" height="14" viewBox="0 0 16 14"><path d="M1 5h3l4-4v12L4 9H1zM10 5c1 1 1 3 0 4M12 3c2 2 2 6 0 8" fill="none" stroke="#ddd" /></svg>
      </SmallIcon>
      <div className="flex w-[70px] flex-col items-center text-[12px] leading-[16px]">
        <span>15:27</span>
        <span>20/03/2023</span>
      </div>
      <div className="relative ml-[12px] mr-[24px]">
        <svg width="17" height="16" viewBox="0 0 17 16"><path d="M0 0h17v12H7l-3 3v-3H0z" fill="#fff" /><path d="M3 3h11M3 6h11M3 9h7" stroke="#333" /></svg>
        <span className="absolute left-[7px] top-[5px] flex h-[17px] w-[17px] items-center justify-center rounded-full border border-[#999] bg-[#333] text-[11px]">1</span>
      </div>
    </div>
  </div>
);

export default function App() {
  return (
    <div className="flex h-[900px] w-[1600px] flex-col overflow-hidden font-['Roboto',sans-serif]">
      <TitleBar />
      <TabBar />
      <Ribbon />
      <FormulaBar />
      <Sheet />
      <HScroll />
      <StatusBar />
      <Taskbar />
    </div>
  );
}
